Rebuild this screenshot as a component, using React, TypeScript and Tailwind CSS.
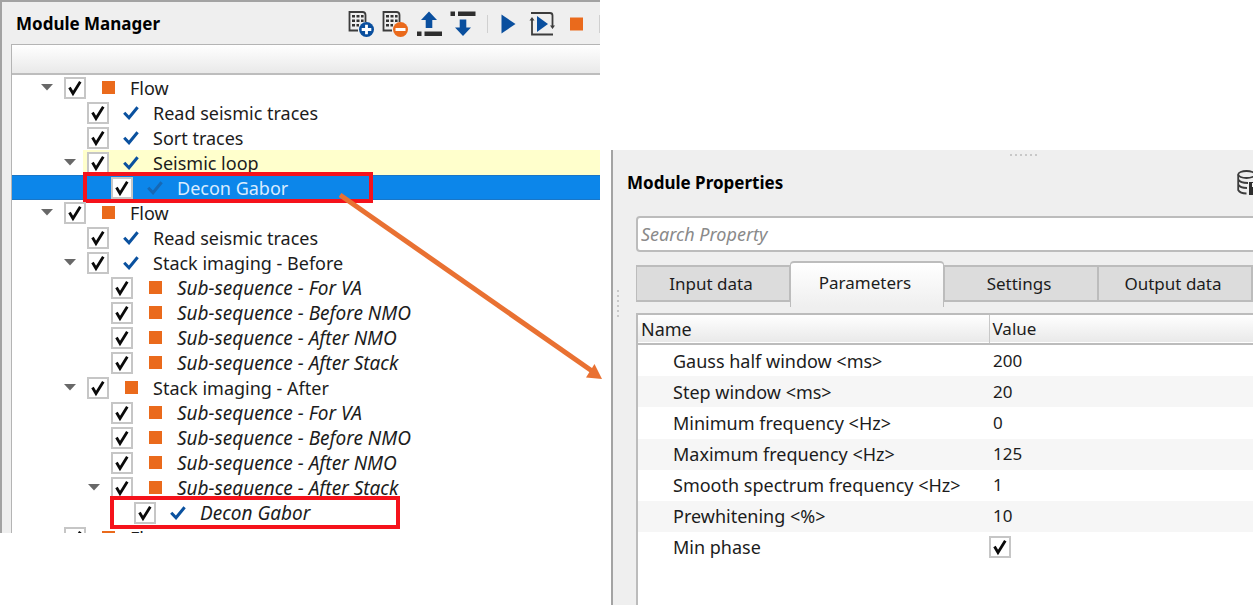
import React, { useState } from "react";
import clsx from "clsx";

type Status = "stop" | "done" | "dim";

interface TreeItem {
	label: string;
	level: 0 | 1 | 2 | 3;
	status: Status;
	open?: boolean;
	italic?: boolean;
	marked?: boolean;
	look?: "loop" | "selected";
}

const treeItems: TreeItem[] = [
	{ label: "Flow", level: 0, status: "stop", open: true },
	{ label: "Read seismic traces", level: 1, status: "done" },
	{ label: "Sort traces", level: 1, status: "done" },
	{ label: "Seismic loop", level: 1, status: "done", open: true, look: "loop" },
	{ label: "Decon Gabor", level: 2, status: "dim", look: "selected", marked: true },
	{ label: "Flow", level: 0, status: "stop", open: true },
	{ label: "Read seismic traces", level: 1, status: "done" },
	{ label: "Stack imaging - Before", level: 1, status: "done", open: true },
	{ label: "Sub-sequence - For VA", level: 2, status: "stop", italic: true },
	{ label: "Sub-sequence - Before NMO", level: 2, status: "stop", italic: true },
	{ label: "Sub-sequence - After NMO", level: 2, status: "stop", italic: true },
	{ label: "Sub-sequence - After Stack", level: 2, status: "stop", italic: true },
	{ label: "Stack imaging - After", level: 1, status: "stop", open: true },
	{ label: "Sub-sequence - For VA", level: 2, status: "stop", italic: true },
	{ label: "Sub-sequence - Before NMO", level: 2, status: "stop", italic: true },
	{ label: "Sub-sequence - After NMO", level: 2, status: "stop", italic: true },
	{ label: "Sub-sequence - After Stack", level: 2, status: "stop", italic: true, open: true },
	{ label: "Decon Gabor", level: 3, status: "done", italic: true, marked: true },
	{ label: "Flow", level: 0, status: "stop", open: true },
];

const indent = {
	0: "pl-[28px]",
	1: "pl-[51px]",
	2: "pl-[75px]",
	3: "pl-[98px]",
};

const properties = [
	{ name: "Gauss half window <ms>", value: "200" },
	{ name: "Step window <ms>", value: "20" },
	{ name: "Minimum frequency <Hz>", value: "0" },
	{ name: "Maximum frequency <Hz>", value: "125" },
	{ name: "Smooth spectrum frequency <Hz>", value: "1" },
	{ name: "Prewhitening <%>", value: "10" },
];

const tabs = ["Input data", "Parameters", "Settings", "Output data"];

function CheckBox({ id }: { id: string }) {
	return (
		<span className="relative block size-[22px] shrink-0">
			<input
				id={id}
				type="checkbox"
				defaultChecked
				className="peer block size-[22px] appearance-none border-2 border-[#c6c6c6] bg-white"
			/>
			<svg
				viewBox="0 0 22 22"
				className="pointer-events-none absolute inset-0 hidden size-[22px] peer-checked:block"
			>
				<path d="M5.500 10.500 9 16.500 16.300 4.800" fill="none" stroke="#0a0a0a" strokeWidth="2.800" />
			</svg>
		</span>
	);
}

function StatusIcon({ status }: { status: Status }) {
	if (status === "stop") return <span className="block size-[13px] bg-[#ea6a1c]" />;
	return (
		<svg viewBox="0 0 16 14" className="h-[14px] w-[16px]">
			<path
				d="M1.200 6.800 6 11.800 14.600 1.200"
				fill="none"
				stroke={status === "dim" ? "#1768b4" : "#0a519f"}
				strokeWidth="3"
			/>
		</svg>
	);
}

function TreeRow({ item, index }: { item: TreeItem; index: number }) {
	const id = `module-${index}`;
	return (
		<li
			className={clsx(
				"relative flex h-[25px] items-center",
				indent[item.level],
				item.look === "selected" && "border-y border-[#1a76c6] bg-[#0c86ea] text-[#d9ecff]"
			)}
		>
			<span className="flex w-[24px] shrink-0 items-center">
				{item.open && (
					<button type="button" aria-label={`Collapse ${item.label}`} className="ml-[1px] block">
						<svg viewBox="0 0 12 7" className="h-[7px] w-[12px]">
							<path d="M0 0H12L6 6.500Z" fill="#686868" />
						</svg>
					</button>
				)}
			</span>
			<span
				className={clsx(
					"flex h-full items-center",
					item.look === "loop" && "-ml-1 flex-1 bg-[#ffffcc] pl-1"
				)}
			>
				<CheckBox id={id} />
				<span className="flex w-[44px] shrink-0 justify-center">
					<StatusIcon status={item.status} />
				</span>
				<label
					htmlFor={id}
					className={clsx("whitespace-nowrap", item.italic && "text-[19px] italic")}
				>
					{item.label}
				</label>
			</span>
			{item.marked && (
				<span
					className={clsx(
						"pointer-events-none absolute -inset-y-1 w-[290px] border-4 border-[#f5121b]",
						item.level === 2 ? "left-[71px]" : "left-[98px]"
					)}
				/>
			)}
		</li>
	);
}

function ListGlyph() {
	return (
		<>
			<path d="M17.500 11V4Q17.500 1 14.500 1H1.500V19.500H10" fill="none" stroke="#3c3c3c" strokeWidth="1.800" />
			<path
				d="M4 4h3v2.600H4zM8.500 4h3v2.600h-3zM13 4h2.600v2.600H13zM4 8.500h3v2.600H4zM8.500 8.500h3v2.600h-3zM13 8.500h2.600v2.600H13zM4 13h3v2.600H4zM8.500 13h2.500v2.600H8.500z"
				fill="#333"
			/>
		</>
	);
}

function ToolButton({ label, children }: { label: string; children: React.ReactNode }) {
	return (
		<button type="button" aria-label={label} className="flex w-[34px] items-center justify-center">
			<svg viewBox="0 0 26 26" className="size-[26px]">
				{children}
			</svg>
		</button>
	);
}

function Grip({ vertical }: { vertical?: boolean }) {
	return (
		<span
			className={clsx(
				"absolute flex gap-[3px]",
				vertical ? "top-[140px] left-1 flex-col" : "top-1 left-[397px]"
			)}
		>
			{[0, 1, 2, 3, 4, 5].map((dot) => (
				<span key={dot} className="size-[2px] bg-[#c8c8c8]" />
			))}
		</span>
	);
}

function ModuleManager() {
	return (
		<section className="border-l-2 border-t-2 border-[#a3a3a3] bg-[#efefef] pl-[9px]">
			<div className="flex h-[42px] items-center pt-[2px]">
				<h2 className="flex-1 pl-[5px] text-[17px] font-bold text-black">Module Manager</h2>
				<div className="flex">
					<ToolButton label="Add module">
						<ListGlyph />
						<circle cx="18.500" cy="18.500" r="7.500" fill="#0a4f9e" />
						<path d="M18.500 13.700v9.600M13.700 18.500h9.600" stroke="#fff" strokeWidth="2.800" />
					</ToolButton>
					<ToolButton label="Remove module">
						<ListGlyph />
						<circle cx="18.500" cy="18.500" r="7.500" fill="#ea6a1c" />
						<path d="M13.500 18.500h10" stroke="#fff" strokeWidth="3" />
					</ToolButton>
					<ToolButton label="Move up">
						<path d="M13 0.500 21 9H16.300V17H9.700V9H5Z" fill="#0a4f9e" />
						<path d="M1 20.500h4.500v4.500H1zM8.500 20.500H26v4.500H8.500z" fill="#2e2e2e" />
					</ToolButton>
					<ToolButton label="Move down">
						<path d="M13 25 21 16.500H16.300V8.500H9.700V16.500H5Z" fill="#0a4f9e" />
						<path d="M0.500 0.500H5v4.500H0.500zM8 0.500H25.500v4.500H8z" fill="#2e2e2e" />
					</ToolButton>
					<span className="my-1 mr-[3px] ml-[7px] w-px bg-[#d0d0d0]" />
					<ToolButton label="Run">
						<path d="M6.500 3.500 20.500 13 6.500 22.500Z" fill="#0a4f9e" />
					</ToolButton>
					<ToolButton label="Run loop">
						<path
							d="M2 2H21Q23.500 2 23.500 4.500V16M24 23.500H3V8"
							fill="none"
							stroke="#3c3c3c"
							strokeWidth="1.800"
						/>
						<path d="M0.500 9.500 3 6 5.500 9.500ZM21 14.500H26L23.500 18Z" fill="#3c3c3c" />
						<path d="M8 5 19 13 8 21Z" fill="#0a4f9e" />
					</ToolButton>
					<ToolButton label="Stop">
						<path d="M7 6.500H20V19.500H7Z" fill="#ea6a1c" />
					</ToolButton>
					<span className="my-1 ml-[6px] w-px bg-[#d0d0d0]" />
				</div>
			</div>
			<div className="border-l border-t border-[#b4b4b4] bg-white">
				<div className="h-[30px] border-b-2 border-[#bdbdbd] bg-linear-to-b from-white to-[#e9e9e9]" />
				<ul className="h-[458px] overflow-hidden">
					{treeItems.map((item, i) => (
						<TreeRow key={i} item={item} index={i} />
					))}
				</ul>
			</div>
		</section>
	);
}

function ModuleProperties() {
	const [activeTab, setActiveTab] = useState("Parameters");

	return (
		<section className="relative mt-[150px] ml-[11px] flex min-h-[455px] flex-col overflow-hidden border-l-2 border-[#a3a3a3] bg-[#efefef] pl-[23px]">
			<Grip />
			<Grip vertical />
			<div className="flex h-[66px] items-center justify-between">
				<h2 className="-ml-[9px] text-[17px] font-bold text-black">Module Properties</h2>
				<button type="button" aria-label="Save to database" className="w-[16px] overflow-hidden">
					<svg viewBox="0 0 26 26" className="size-[26px]">
						<g fill="none" stroke="#3c3c3c" strokeWidth="1.800">
							<ellipse cx="9.500" cy="4.500" rx="8.300" ry="3.500" />
							<path d="M1.200 4.500V20Q3 23.500 9.500 23.500M17.800 4.500V11M1.200 9.500Q3 13 11 13M1.200 14.500Q3 18 10 18" />
						</g>
						<path d="M12 12H26V25H12Z" fill="#2e2e2e" />
						<path d="M15 13h8v4h-8z" fill="#efefef" />
					</svg>
				</button>
			</div>
			<input
				type="text"
				aria-label="Search Property"
				placeholder="Search Property"
				className="-mr-2 h-[36px] shrink-0 rounded border-2 border-[#bcbcbc] bg-white px-[3px] placeholder:text-[#8a8a8a] placeholder:italic"
			/>
			<div role="tablist" className="mt-[9px] flex h-[52px] shrink-0 items-start">
				{tabs.map((tab) => (
					<button
						key={tab}
						type="button"
						role="tab"
						aria-selected={activeTab === tab}
						onClick={() => setActiveTab(tab)}
						className={clsx(
							"w-[154px] shrink-0 border-[#bcbcbc] pr-1 text-[17px]",
							activeTab === tab
								? "h-[46px] rounded-t border-x border-t-2 bg-linear-to-b from-white to-[#efefef] pb-[4px]"
								: "mt-[4px] h-[37px] border-x border-t-2 border-b-2 bg-[#dcdcdc]"
						)}
					>
						{tab}
					</button>
				))}
				<span className="mt-[4px] h-[37px] w-[20px] shrink-0 border-2 border-[#bcbcbc] bg-[#dcdcdc]" />
			</div>
			<div className="flex-1 border-l-2 border-t-2 border-[#bcbcbc] bg-white">
				<table className="h-[248px] w-full table-fixed border-collapse text-left">
					<thead>
						<tr className="h-[29px] border-b-2 border-[#bcbcbc] bg-linear-to-b from-white to-[#e9e9e9]">
							<th className="w-[351px] border-r border-[#c8c8c8] p-0 pl-[3px] font-normal">Name</th>
							<th className="p-0 pl-[3px] text-[17px] font-normal">Value</th>
						</tr>
					</thead>
					<tbody>
						{properties.map((prop) => (
							<tr key={prop.name} className="even:bg-[#f6f6f6]">
								<td className="p-0 pl-[35px]">{prop.name}</td>
								<td className="p-0 pl-[4px] text-[17px]">{prop.value}</td>
							</tr>
						))}
						<tr>
							<td className="p-0 pl-[35px]">
								<label htmlFor="min-phase">Min phase</label>
							</td>
							<td className="p-0">
								<CheckBox id="min-phase" />
							</td>
						</tr>
					</tbody>
				</table>
			</div>
		</section>
	);
}

export default function App() {
	return (
		<main className="relative grid min-h-screen grid-cols-[600fr_653fr] items-start overflow-hidden bg-white font-['Noto_Sans',sans-serif] text-[18px] leading-[24px] text-[#1c1c1c]">
			<ModuleManager />
			<ModuleProperties />
			<svg
				viewBox="0 0 264 188"
				className="pointer-events-none absolute top-[193px] left-[339px] h-[188px] w-[264px]"
			>
				<path d="M1 2 253 178" stroke="#e97132" strokeWidth="5" />
				<path d="M263 186 255.500 171 247 184.500Z" fill="#e97132" />
			</svg>
		</main>
	);
}
